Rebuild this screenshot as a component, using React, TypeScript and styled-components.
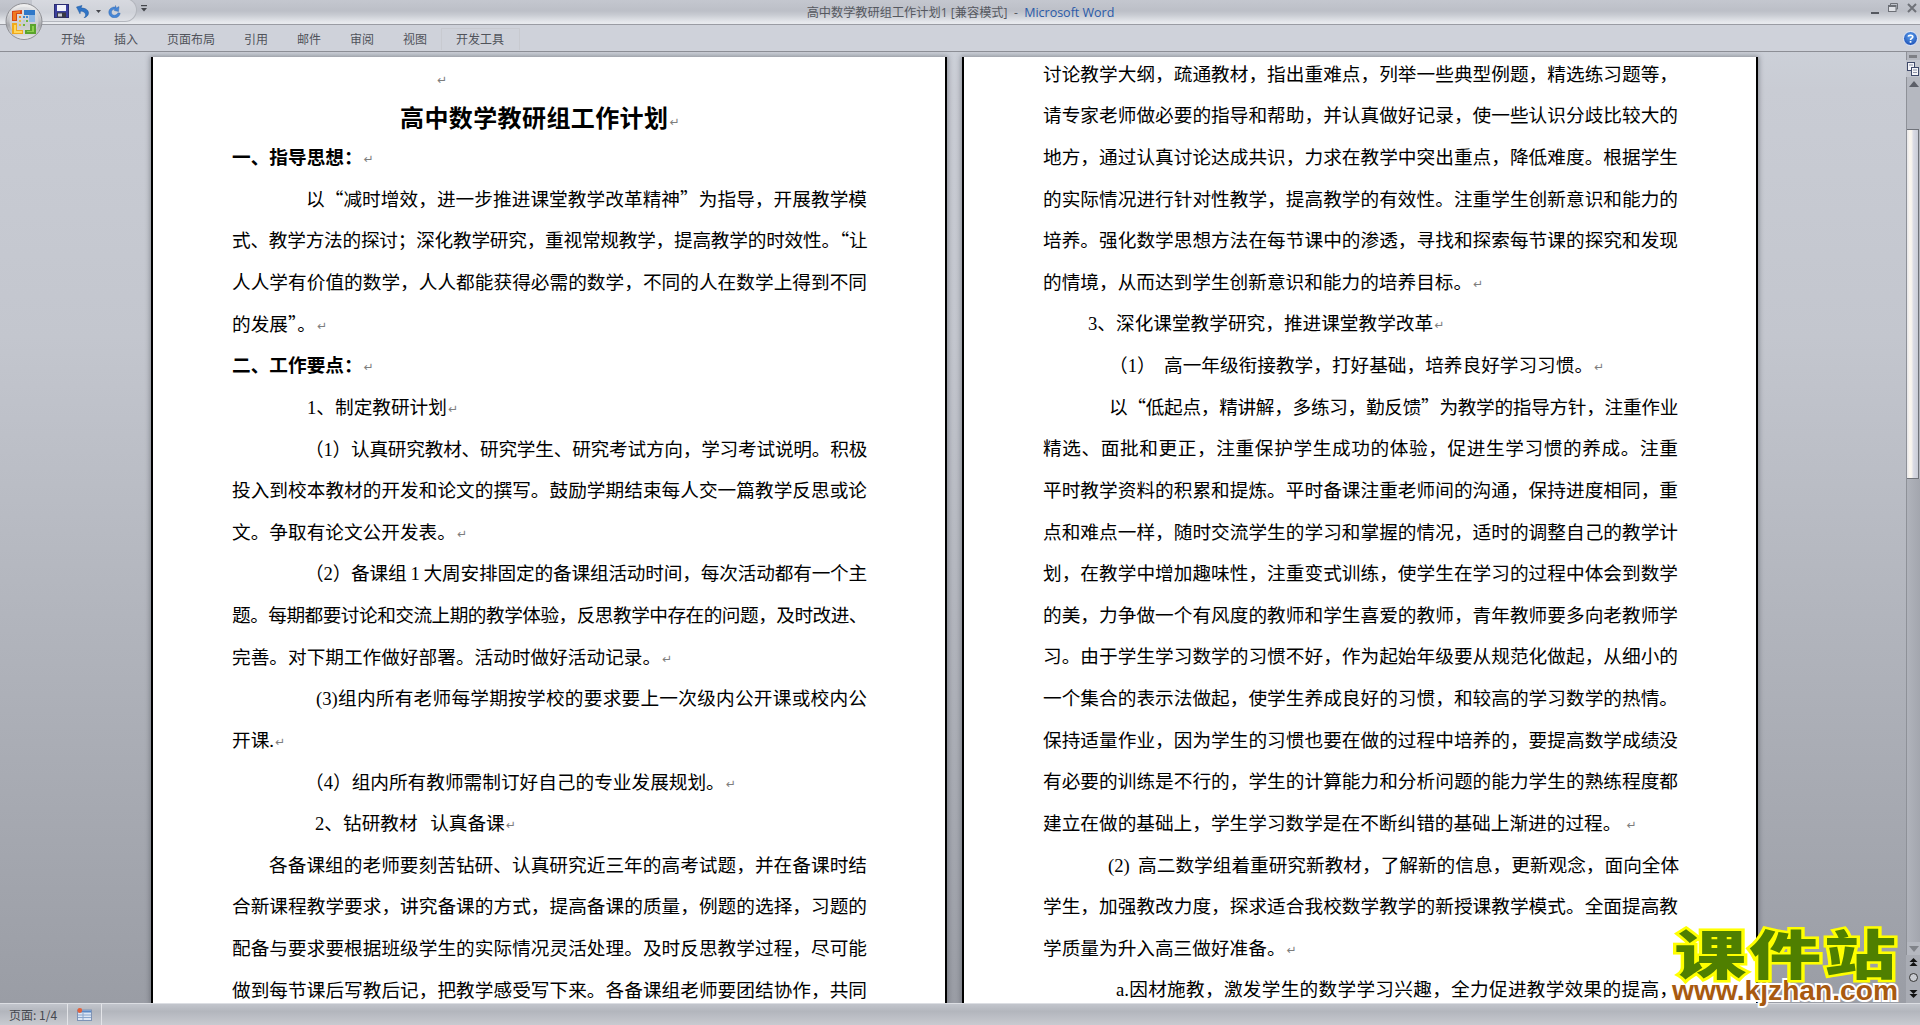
import React from "react";
import styled, { createGlobalStyle } from "styled-components";

const Global = createGlobalStyle`
  html, body { margin: 0; padding: 0; height: 100%; overflow: hidden; }
  body { font-family: "Noto Sans CJK SC", "Liberation Sans", sans-serif; }
`;

const Root = styled.div`
  height: 100vh;
  display: flex;
  flex-direction: column;
  overflow: hidden;
  position: relative;
  background: #cdd0d8;
`;

const TitleBar = styled.header`
  height: 24px;
  flex: none;
  display: flex;
  align-items: center;
  justify-content: center;
  position: relative;
  background: linear-gradient(#c4c7cf 0, #bcbfc7 45%, #c8cbd2 62%, #e6e8ec 92%, #e9ebef 100%);
  border-bottom: 1px solid #9a9ca3;
  font-size: 12.2px;
  color: #55585f;
  white-space: pre;
  padding-left: 1px;
`;

const Brand = styled.span`
  color: #2a5aa8;
  font-family: "Open Sans", sans-serif;
  font-size: 12.5px;
`;

const Latin12 = styled.span`
  font-family: "Open Sans", sans-serif;
`;

const Qat = styled.div`
  position: absolute;
  left: 32px;
  top: -2px;
  width: 105px;
  height: 24px;
  border-radius: 0 14px 14px 0;
  border: 1px solid #b3b6bd;
  border-left: none;
  background: linear-gradient(#d8dae0, #cfd2d9 60%, #dfe1e6);
  display: flex;
  align-items: center;
  padding: 2px 0 0 22px;
  gap: 7px;
  box-sizing: border-box;
`;

const QatMore = styled.div`
  position: absolute;
  left: 141px;
  top: 5px;
  display: flex;
`;

const WindowButtons = styled.div`
  position: absolute;
  right: 3px;
  top: 3px;
  display: flex;
  align-items: flex-start;
  gap: 9px;
`;

const Ribbon = styled.nav`
  height: 27px;
  flex: none;
  box-sizing: border-box;
  display: flex;
  align-items: stretch;
  padding: 3px 0 0 46.5px;
  background: #cfd2da;
  border-bottom: 1px solid #8c8e95;
  position: relative;
`;

const Tab = styled.div<{ $hover?: boolean }>`
  padding: 0 14.5px;
  font-size: 12px;
  line-height: 19px;
  color: #50535a;
  box-sizing: border-box;
  margin-bottom: 1px;
  border: 1px solid ${(p) => (p.$hover ? "#c8cad0" : "transparent")};
  border-bottom: none;
  margin-left: -1px;
  margin-right: -1px;
`;

const Help = styled.div`
  position: absolute;
  right: 2px;
  top: 6px;
  display: flex;
`;

const OfficeButton = styled.div`
  position: absolute;
  left: 5px;
  top: 3px;
  width: 38px;
  height: 37px;
  display: flex;
`;

const Work = styled.main`
  flex: 1;
  min-height: 0;
  display: flex;
  background: linear-gradient(#ccd0d8 0, #c9ccd4 4%, #c3c6ce 30%, #9a9da5 100%);
`;

const Pages = styled.div`
  flex: 1;
  min-width: 0;
  display: flex;
  gap: 15px;
  padding: 5px 0 0 151px;
  overflow: hidden;
`;

const Page = styled.section`
  width: 796px;
  flex: none;
  box-sizing: border-box;
  background: #fff;
  border-left: 2px solid #000;
  border-right: 2px solid #000;
  padding: 0 0 0 79px;
  overflow: hidden;
  box-shadow: 0 0 5px 1px rgba(60, 62, 70, 0.45);
  color: #000;
  font-size: 18.67px;
`;

const Column = styled.div<{ $shift: number }>`
  width: 635px;
  margin-top: ${(p) => p.$shift}px;
`;

const Line = styled.div<{ $indent: number; $full?: boolean; $bold?: boolean; $title?: boolean; $squeeze?: number }>`
  height: ${(p) => (p.$title ? 37.6 : 41.63)}px;
  line-height: ${(p) => (p.$title ? 37.6 : 41.63)}px;
  padding-left: ${(p) => p.$indent}px;
  white-space: nowrap;
  font-weight: ${(p) => (p.$bold || p.$title ? 700 : 400)};
  font-size: ${(p) => (p.$title ? 24 : 18.67)}px;
  letter-spacing: ${(p) => p.$squeeze ?? 0}px;
  text-align: ${(p) => (p.$full ? "justify" : "left")};
  text-align-last: ${(p) => (p.$full ? "justify" : "left")};
`;

const Latin = styled.span`
  font-family: "Liberation Serif", serif;
`;

const Mark = styled.span`
  font-family: "DejaVu Sans", sans-serif;
  font-size: 12px;
  font-weight: 400;
  letter-spacing: 0;
  color: #7d7d7d;
  margin-left: 1px;
  position: relative;
  top: -1px;
`;

const Scroll = styled.aside`
  width: 14px;
  flex: none;
  display: flex;
  flex-direction: column;
  position: relative;
  background: #b5b8c0;
  border-left: 1px solid #8e9198;
  box-sizing: border-box;
`;

const Splitter = styled.div`
  height: 3px;
  width: 8px;
  background: #7d7f85;
  margin: 3px 0 2px 2px;
`;

const RulerBtn = styled.div`
  height: 17px;
  margin-left: -1px;
  display: flex;
  align-items: center;
  justify-content: center;
  background: #c2c5cd;
`;

const ScrollArrow = styled.div`
  height: 13px;
  display: flex;
  align-items: center;
  justify-content: center;
`;

const ThumbGap = styled.div`
  height: 39px;
`;

const Thumb = styled.div`
  height: 350px;
  box-sizing: border-box;
  border-top: 1px solid #70737a;
  border-bottom: 1px solid #70737a;
  border-right: 1px solid #70737a;
  background: linear-gradient(90deg, #e6e6ea 0, #fbf7f0 25%, #f8f4ee 40%, #d9dae4 60%, #c9ccd6 100%);
  margin-right: 1px;
`;

const Track = styled.div`
  flex: 1;
  background: linear-gradient(90deg, #b0b3bb, #a3a6ae);
`;

const NavBlock = styled.div`
  height: 48px;
  flex: none;
  margin-left: -1px;
  background: #a9acb4;
  display: flex;
  flex-direction: column;
  align-items: center;
  justify-content: space-around;
  padding: 0 0 2px;
  box-sizing: border-box;
`;

const Status = styled.footer`
  height: 22px;
  flex: none;
  box-sizing: border-box;
  display: flex;
  align-items: stretch;
  border-top: 1px solid #dcdee3;
  background: linear-gradient(#c2c5cc 0, #b3b6bd 35%, #c8cad0 100%);
  font-size: 12px;
  color: #45484f;
`;

const StatusCell = styled.div<{ $width: number }>`
  width: ${(p) => p.$width}px;
  box-sizing: border-box;
  border-right: 1px solid #e3e4e8;
  display: flex;
  align-items: center;
  padding-left: 9px;
`;

const Watermark = styled.div`
  position: absolute;
  left: 1672px;
  top: 926px;
  width: 226px;
  display: flex;
  flex-direction: column;
  align-items: center;
  pointer-events: none;
`;

const WatermarkCn = styled.div`
  font-family: "Noto Sans CJK SC", sans-serif;
  font-weight: 900;
  font-size: 53px;
  line-height: 52px;
  letter-spacing: 2px;
  margin-right: -2px;
  color: #4f7f00;
  -webkit-text-stroke: 5px #ffff00;
  paint-order: stroke fill;
  white-space: nowrap;
  transform: scaleX(1.36);
`;

const WatermarkUrl = styled.div`
  font-family: "Liberation Sans", sans-serif;
  font-weight: 700;
  font-size: 28.2px;
  line-height: 25px;
  color: #a85a10;
  -webkit-text-stroke: 4px #ffffff;
  paint-order: stroke fill;
  white-space: nowrap;
`;

type L = { t: string; i?: number; f?: boolean; b?: boolean; m?: boolean; title?: boolean; s?: number };

const leftLines: L[] = [
  { t: "", i: 204, m: true },
  { t: "高中数学教研组工作计划", i: 168, m: true, title: true, s: 0.4 },
  { t: "一、指导思想：", b: true, m: true },
  { t: "以“减时增效，进一步推进课堂教学改革精神”为指导，开展教学模", i: 74, f: true },
  { t: "式、教学方法的探讨；深化教学研究，重视常规教学，提高教学的时效性。“让", f: true, s: -0.54 },
  { t: "人人学有价值的数学，人人都能获得必需的数学，不同的人在数学上得到不同", f: true },
  { t: "的发展”。", m: true },
  { t: "二、工作要点：", b: true, m: true },
  { t: "1、制定教研计划", i: 75, m: true },
  { t: "（1）认真研究教材、研究学生、研究考试方向，学习考试说明。积极", i: 73, f: true, s: -0.32 },
  { t: "投入到校本教材的开发和论文的撰写。鼓励学期结束每人交一篇教学反思或论", f: true },
  { t: "文。争取有论文公开发表。", m: true },
  { t: "（2）备课组 1 大周安排固定的备课组活动时间，每次活动都有一个主", i: 73, f: true, s: -0.25 },
  { t: "题。每期都要讨论和交流上期的教学体验，反思教学中存在的问题，及时改进、", f: true, s: -0.54 },
  { t: "完善。对下期工作做好部署。活动时做好活动记录。", m: true },
  { t: "(3)组内所有老师每学期按学校的要求要上一次级内公开课或校内公", i: 84, f: true },
  { t: "开课.", m: true },
  { t: "（4）组内所有教师需制订好自己的专业发展规划。", i: 73, m: true },
  { t: "2、钻研教材\u00a0\u00a0\u00a0认真备课", i: 83, m: true },
  { t: "各备课组的老师要刻苦钻研、认真研究近三年的高考试题，并在备课时结", i: 37, f: true },
  { t: "合新课程教学要求，讲究备课的方式，提高备课的质量，例题的选择，习题的", f: true },
  { t: "配备与要求要根据班级学生的实际情况灵活处理。及时反思教学过程，尽可能", f: true },
  { t: "做到每节课后写教后记，把教学感受写下来。各备课组老师要团结协作，共同", f: true },
];

const rightLines: L[] = [
  { t: "讨论教学大纲，疏通教材，指出重难点，列举一些典型例题，精选练习题等，", f: true },
  { t: "请专家老师做必要的指导和帮助，并认真做好记录，使一些认识分歧比较大的", f: true },
  { t: "地方，通过认真讨论达成共识，力求在教学中突出重点，降低难度。根据学生", f: true },
  { t: "的实际情况进行针对性教学，提高教学的有效性。注重学生创新意识和能力的", f: true },
  { t: "培养。强化数学思想方法在每节课中的渗透，寻找和探索每节课的探究和发现", f: true },
  { t: "的情境，从而达到学生创新意识和能力的培养目标。", m: true },
  { t: "3、深化课堂教学研究，推进课堂教学改革", i: 45, m: true },
  { t: "（1）\u00a0\u00a0高一年级衔接教学，打好基础，培养良好学习习惯。", i: 66, m: true },
  { t: "以“低起点，精讲解，多练习，勤反馈”为教学的指导方针，注重作业", i: 66, f: true, s: -0.32 },
  { t: "精选、面批和更正，注重保护学生成功的体验，促进生学习惯的养成。注重", f: true },
  { t: "平时教学资料的积累和提炼。平时备课注重老师间的沟通，保持进度相同，重", f: true },
  { t: "点和难点一样，随时交流学生的学习和掌握的情况，适时的调整自己的教学计", f: true },
  { t: "划，在教学中增加趣味性，注重变式训练，使学生在学习的过程中体会到数学", f: true },
  { t: "的美，力争做一个有风度的教师和学生喜爱的教师，青年教师要多向老教师学", f: true },
  { t: "习。由于学生学习数学的习惯不好，作为起始年级要从规范化做起，从细小的", f: true },
  { t: "一个集合的表示法做起，使学生养成良好的习惯，和较高的学习数学的热情。", f: true },
  { t: "保持适量作业，因为学生的习惯也要在做的过程中培养的，要提高数学成绩没", f: true },
  { t: "有必要的训练是不行的，学生的计算能力和分析问题的能力学生的熟练程度都", f: true },
  { t: "建立在做的基础上，学生学习数学是在不断纠错的基础上渐进的过程。\u00a0", m: true },
  { t: "(2)\u00a0\u00a0高二数学组着重研究新教材，了解新的信息，更新观念，面向全体", i: 65, f: true },
  { t: "学生，加强教改力度，探求适合我校数学教学的新授课教学模式。全面提高教", f: true },
  { t: "学质量为升入高三做好准备。", m: true },
  { t: "a.因材施教，激发学生的数学学习兴趣，全力促进教学效果的提高，", i: 73, f: true },
];

function renderRuns(t: string) {
  return t.split(/([0-9A-Za-z.()]+)/).map((part, i) =>
    /^[0-9A-Za-z.()]+$/.test(part) ? <Latin key={i}>{part}</Latin> : <React.Fragment key={i}>{part}</React.Fragment>
  );
}

function DocLines({ lines }: { lines: L[] }) {
  return (
    <>
      {lines.map((l, i) => (
        <Line key={i} $indent={l.i ?? 0} $full={l.f} $bold={l.b} $title={l.title} $squeeze={l.s}>
          {renderRuns(l.t)}
          {l.m && <Mark>↵</Mark>}
        </Line>
      ))}
    </>
  );
}

const OfficeLogo = () => (
  <svg width="38" height="37" viewBox="0 0 38 37">
    <defs>
      <linearGradient id="orb" x1="0" y1="0" x2="0" y2="1">
        <stop offset="0" stopColor="#f4f4f4" />
        <stop offset="0.45" stopColor="#c2c3c7" />
        <stop offset="0.6" stopColor="#a6a7ab" />
        <stop offset="1" stopColor="#ececec" />
      </linearGradient>
    </defs>
    <circle cx="19" cy="18.5" r="18" fill="url(#orb)" stroke="#8f9095" />
    <circle cx="19" cy="18.5" r="14.5" fill="#d9dadd" opacity="0.7" />
    <path d="M7 8 L17 7 V11 H12 V18 H7 Z" fill="#d5451a" />
    <path d="M8 9 L15 8 V10 H11 V17 H8 Z" fill="#f07a20" />
    <path d="M19 7 H30 V12 H19 Z" fill="#2f78c8" />
    <path d="M24 12 H30 V19 H24 Z" fill="#8db7e4" />
    <path d="M7 20 H12 V27 H18 V31 H7 Z" fill="#f0a91c" />
    <path d="M9 22 H11 V28 H17 V30 H9 Z" fill="#ffd75a" />
    <path d="M20 27 H25 V21 H31 V31 H20 Z" fill="#5aa42c" />
    <path d="M22 29 H29 V23 H27 V28 H22 Z" fill="#8dd04e" />
    <g fill="#e98a2c">
      <rect x="14" y="13" width="2" height="2" />
      <rect x="18" y="13" width="2" height="2" fill="#3c86cf" />
      <rect x="21" y="13" width="2" height="2" fill="#3c86cf" />
      <rect x="14" y="17" width="2" height="2" fill="#e6c13a" />
      <rect x="18" y="17" width="2" height="2" fill="#b9c9d8" />
      <rect x="21" y="17" width="2" height="2" fill="#6fb53a" />
      <rect x="14" y="21" width="2" height="2" fill="#e6c13a" />
      <rect x="18" y="21" width="2" height="2" fill="#6fb53a" />
    </g>
  </svg>
);

const SaveIcon = () => (
  <svg width="15" height="14" viewBox="0 0 15 14">
    <rect x="0.5" y="0.5" width="14" height="13" fill="#3b3f9e" stroke="#2a2c70" />
    <rect x="3" y="1" width="9" height="6" fill="#f1f2fa" />
    <rect x="3" y="8.5" width="9" height="5" fill="#3a3a44" />
    <rect x="4" y="9.5" width="4" height="3" fill="#c9cad3" />
  </svg>
);

const UndoIcon = () => (
  <svg width="13" height="13" viewBox="0 0 13 13">
    <path d="M0.5 2 L6 0.5 L5 3 C9.5 3 12.5 5 12.5 8 C12.5 10.5 10.5 12.2 8 12.8 C9.8 11.4 10 9.6 9 8 C8 6.6 6 6 4.5 6.2 L4 8.8 Z" fill="#2f74c6" stroke="#1e569c" strokeWidth="0.5" />
  </svg>
);

const Caret = () => (
  <svg width="5" height="3" viewBox="0 0 5 3">
    <path d="M0 0 H5 L2.5 3 Z" fill="#44464c" />
  </svg>
);

const RedoIcon = () => (
  <svg width="13" height="13" viewBox="0 0 13 13">
    <path d="M7.5 0.5 L8.3 3 L11 1.6 L10.5 6.5 L6.2 5.5 L7 4.3 C4.6 4 3.4 5.6 3.4 7.2 C3.4 9 5 10.4 6.8 10.2 C8.5 10 9.6 9 9.9 7.8 L12.2 8.2 C11.8 10.8 9.6 12.8 6.8 12.8 C3.4 12.8 0.8 10.4 0.8 7.2 C0.8 4.2 3.6 1.6 7.5 2 Z" fill="#4786d6" stroke="#2a62ac" strokeWidth="0.4" />
  </svg>
);

const MoreIcon = () => (
  <svg width="6" height="7" viewBox="0 0 6 7">
    <rect x="0" y="0" width="6" height="1.2" fill="#44464c" />
    <path d="M0 3 H6 L3 6.5 Z" fill="#44464c" />
  </svg>
);

const MinIcon = () => (
  <svg width="8" height="13" viewBox="0 0 8 13">
    <rect x="0" y="9" width="8" height="2" fill="#55585f" />
  </svg>
);
const RestoreIcon = () => (
  <svg width="10" height="9" viewBox="0 0 10 9">
    <path d="M2.5 2 V0.5 H9.5 V6 H8" fill="none" stroke="#6d7077" />
    <rect x="0.5" y="2.5" width="7.5" height="6" fill="#dfe1e6" stroke="#6d7077" />
    <rect x="0.5" y="2.5" width="7.5" height="1.5" fill="#6d7077" />
  </svg>
);
const CloseIcon = () => (
  <svg width="10" height="10" viewBox="0 0 10 10">
    <path d="M1 1 L9 9 M9 1 L1 9" stroke="#6f7279" strokeWidth="2" />
  </svg>
);

const HelpIcon = () => (
  <svg width="15" height="15" viewBox="0 0 15 15">
    <defs>
      <radialGradient id="helpg" cx="0.5" cy="0.35" r="0.7">
        <stop offset="0" stopColor="#5fa2ee" />
        <stop offset="1" stopColor="#1648b0" />
      </radialGradient>
    </defs>
    <circle cx="7.5" cy="7.5" r="7" fill="url(#helpg)" stroke="#e8eefc" />
    <path d="M5.3 5.6 C5.4 3.8 9.8 3.6 9.8 5.8 C9.8 7.4 7.6 7.4 7.5 9" fill="none" stroke="#fff" strokeWidth="1.6" />
    <rect x="6.7" y="10" width="1.7" height="1.7" fill="#fff" />
  </svg>
);

const RulerIcon = () => (
  <svg width="12" height="14" viewBox="0 0 12 14">
    <rect x="0.5" y="0.5" width="7" height="8" fill="#f5f5f8" stroke="#3f4a6a" />
    <rect x="4.5" y="5.5" width="7" height="8" fill="#f5f5f8" stroke="#3f4a6a" />
    <path d="M2 3 H6 M6 8 H10 M6 10.5 H10" stroke="#8d93a8" />
  </svg>
);

const ArrowUp = () => (
  <svg width="10" height="6" viewBox="0 0 10 6">
    <path d="M5 0 L10 6 H0 Z" fill="#5c5f68" />
  </svg>
);
const ArrowDown = () => (
  <svg width="10" height="6" viewBox="0 0 10 6">
    <path d="M0 0 H10 L5 6 Z" fill="#808389" />
  </svg>
);
const PrevIcon = () => (
  <svg width="9" height="9" viewBox="0 0 9 9">
    <path d="M4.5 0 L8.5 4 H0.5 Z M4.5 4 L8.5 8 H0.5 Z" fill="#111" />
  </svg>
);
const NextIcon = () => (
  <svg width="9" height="9" viewBox="0 0 9 9">
    <path d="M0.5 1 H8.5 L4.5 5 Z M0.5 5 H8.5 L4.5 9 Z" fill="#111" />
  </svg>
);
const BrowseIcon = () => (
  <svg width="9" height="9" viewBox="0 0 9 9">
    <circle cx="4.5" cy="4.5" r="4" fill="#c8cad0" stroke="#333" />
  </svg>
);

const LayoutIcon = () => (
  <svg width="15" height="13" viewBox="0 0 15 13">
    <rect x="0.5" y="2" width="14" height="10.5" fill="#dce6f4" stroke="#7f93b5" />
    <rect x="1" y="2.5" width="13" height="2" fill="#5a88c4" />
    <path d="M1 7 H14 M1 9.5 H14 M6 5 V12" stroke="#8aa6cc" />
    <circle cx="2.8" cy="2.5" r="2.4" fill="#e2603a" />
  </svg>
);

export default function App() {
  return (
    <Root lang="zh-CN">
      <Global />
      <TitleBar>
        高中数学教研组工作计划<Latin12>1 [</Latin12>兼容模式<Latin12>]  -  </Latin12>
        <Brand>Microsoft Word</Brand>
        <Qat>
          <SaveIcon />
          <UndoIcon />
          <Caret />
          <RedoIcon />
        </Qat>
        <QatMore>
          <MoreIcon />
        </QatMore>
        <WindowButtons>
          <MinIcon />
          <RestoreIcon />
          <CloseIcon />
        </WindowButtons>
      </TitleBar>
      <Ribbon>
        <Tab>开始</Tab>
        <Tab>插入</Tab>
        <Tab>页面布局</Tab>
        <Tab>引用</Tab>
        <Tab>邮件</Tab>
        <Tab>审阅</Tab>
        <Tab>视图</Tab>
        <Tab $hover>开发工具</Tab>
        <Help>
          <HelpIcon />
        </Help>
      </Ribbon>
      <OfficeButton>
        <OfficeLogo />
      </OfficeButton>
      <Work>
        <Pages>
          <Page>
            <Column $shift={-1}>
              <DocLines lines={leftLines} />
            </Column>
          </Page>
          <Page>
            <Column $shift={-5.3}>
              <DocLines lines={rightLines} />
            </Column>
          </Page>
        </Pages>
        <Scroll>
          <Splitter />
          <RulerBtn>
            <RulerIcon />
          </RulerBtn>
          <ScrollArrow>
            <ArrowUp />
          </ScrollArrow>
          <ThumbGap />
          <Thumb />
          <Track />
          <ScrollArrow>
            <ArrowDown />
          </ScrollArrow>
          <NavBlock>
            <PrevIcon />
            <BrowseIcon />
            <NextIcon />
          </NavBlock>
        </Scroll>
      </Work>
      <Status>
        <StatusCell $width={68}>页面: 1/4</StatusCell>
        <StatusCell $width={34}>
          <LayoutIcon />
        </StatusCell>
      </Status>
      <Watermark>
        <WatermarkCn>课件站</WatermarkCn>
        <WatermarkUrl>www.kjzhan.com</WatermarkUrl>
      </Watermark>
    </Root>
  );
}
